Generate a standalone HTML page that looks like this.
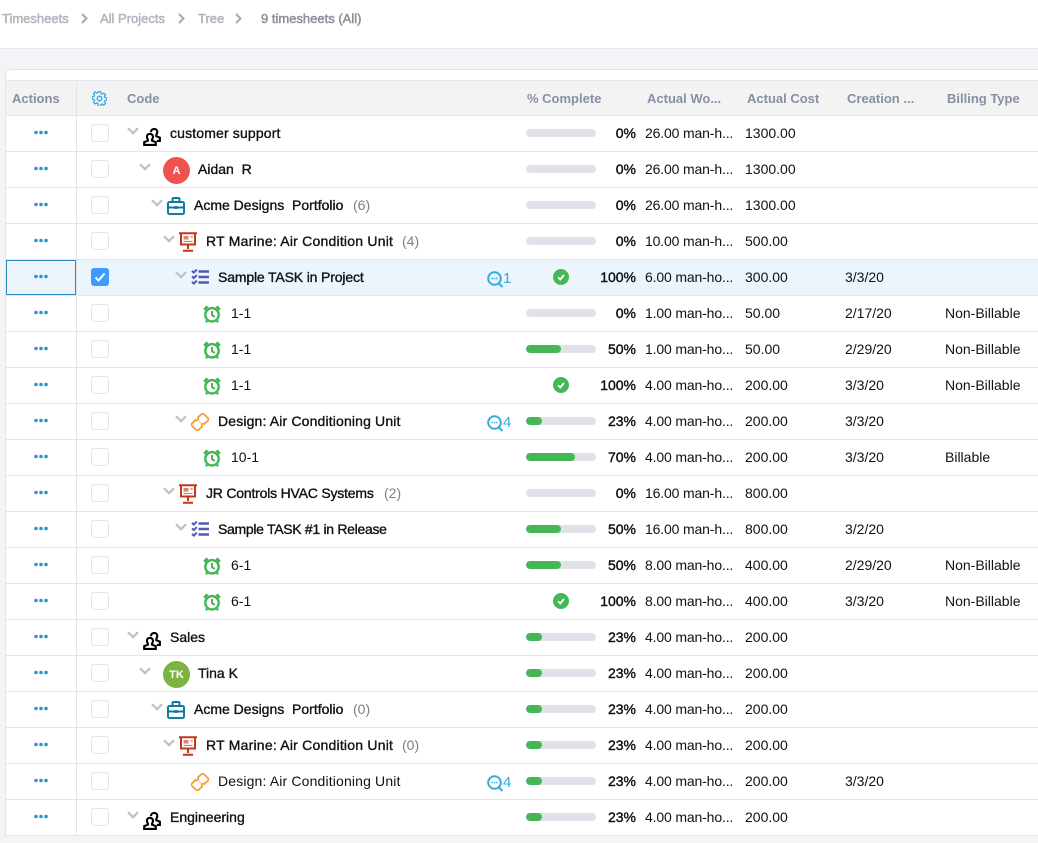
<!DOCTYPE html>
<html><head><meta charset="utf-8"><style>
html,body{margin:0;padding:0;width:1038px;height:843px;overflow:hidden;background:#fff;font-family:"Liberation Sans",sans-serif;font-size:14px;color:#111}
#top{position:absolute;left:0;top:0;width:1038px;height:48px;border-bottom:1px solid #e3e5ea}
#bg{position:absolute;left:0;top:49px;width:1038px;height:794px;background:#f3f4f6}
#card{position:absolute;left:5px;top:69px;width:1040px;height:767px;background:#fff;border:1px solid #e3e5ea;border-radius:4px 0 0 0;box-sizing:border-box}
.bc{position:absolute;top:10px;line-height:18px;color:#b0b4bc;font-size:13px;-webkit-text-stroke:.5px #b0b4bc;white-space:nowrap}
.hd{position:absolute;left:6px;top:80px;width:1032px;height:34px;background:#f3f3f4;border-top:1px solid #e3e5ea;border-bottom:1px solid #e3e5ea}
.h{position:absolute;top:81px;line-height:35px;color:#8790a3;font-weight:bold;font-size:13px;white-space:nowrap}
.r{position:absolute;left:6px;width:1032px;height:35px;border-bottom:1px solid #e3e5ea;white-space:nowrap}
.r.s{background:#ebf5fb}
.r>*{position:absolute}
.r span{line-height:34px;top:0}
.n{-webkit-text-stroke:.35px #111}
.c{color:#7b7f87}
.pc{right:402px;width:50px;text-align:right;-webkit-text-stroke:.4px #111}
.w{left:639px;letter-spacing:-.15px}.k{left:739px}.t{left:839px}.b{left:939px}
.dots{left:28px;top:14px;width:14px;height:5px}
.cb{left:85px;top:8px;width:18px;height:18px;box-sizing:border-box;border:1px solid #e3e5ea;border-radius:3px;background:#fff}
.ch{top:11px;width:12px;height:8px}
.bar{left:520px;top:13px;width:70px;height:8px;border-radius:4px;background:#dfe2e8;overflow:hidden}
.bar b{display:block;height:8px;background:#45b757;border-radius:4px}
.ok{left:547px;top:9px;width:16px;height:16px}
.cm{left:481px;top:11px;width:17px;height:17px}
.dg{left:497px;color:#3aa9de;font-size:15px;top:2px!important}
.av{left:157px;top:5px;width:27px;height:27px;border-radius:50%;color:#fff;font-size:11px;font-weight:bold;line-height:28px;text-align:center;font-style:normal}
.vl{position:absolute;left:76px;top:81px;width:1px;height:754px;background:#e3e5ea}
.cur{position:absolute;left:6px;top:260px;width:70px;height:35px;box-sizing:border-box;border:1px solid #2e8bc0}
svg{display:block}
</style></head><body>
<svg width="0" height="0" style="position:absolute"><defs>
<symbol id="dots" viewBox="0 0 14 5"><circle cx="2" cy="2.500" r="1.800" fill="#2f93c9"/><circle cx="7" cy="2.500" r="1.800" fill="#2f93c9"/><circle cx="12" cy="2.500" r="1.800" fill="#2f93c9"/></symbol>
<symbol id="chev" viewBox="0 0 12 8"><path d="M1 1.200l5 5 5-5" fill="none" stroke="#bcc3cf" stroke-width="2.400"/></symbol>
<symbol id="team" viewBox="0 0 18 18"><g fill="none" stroke="#000" stroke-width="2.100"><path d="M6.800 5.800c-1.900 0-2.900 1.400-2.900 3 0 1.200.5 2.100 1 2.800v1.100L1.200 14.100v2.800h11.600v-2.800L9 12.700v-1.100c.5-.7 1-1.600 1-2.800 0-1.600-1.200-3-3.200-3z"/><path d="M7.800 4C8.300 2 9.700 1 11.300 1c1.900 0 3 1.400 3 3 0 1.200-.5 2.100-1 2.800v1.400l3.600 1.500v3.200h-3"/></g></symbol>
<symbol id="brief" viewBox="0 0 18 18"><g fill="none" stroke="#0e7a9c" stroke-width="2"><rect x="1" y="5" width="16" height="12" rx="1.500"/><path d="M5.500 5V2.200Q5.500 1 6.700 1h4.600q1.200 0 1.200 1.200V5M1 10.500h16"/></g><rect x="7.500" y="9" width="3" height="3" fill="#0e7a9c"/></symbol>
<symbol id="pres" viewBox="0 0 18 20"><g fill="none" stroke="#c0391b" stroke-width="2"><path d="M0 1.200h18M2 1.500v11h14v-11M9 12.500V17M4 18.800h10"/></g><rect x="4.500" y="4" width="5" height="3.500" fill="#d9836f"/><path d="M11 5h3M4.500 9.500h9" stroke="#d9836f" stroke-width="1.200"/></symbol>
<symbol id="task" viewBox="0 0 18 16"><g fill="none" stroke="#4f5bb0"><path d="M7.500 2.500H18M7.500 8H18M7.500 13.500H18" stroke-width="2.500"/><path d="M1 1.800l1.800 1.800L5.800.6M1 7.300l1.800 1.800 3-3M1 12.800l1.800 1.800 3-3" stroke-width="2"/></g></symbol>
<symbol id="clock" viewBox="0 0 18 18"><g fill="none" stroke="#45b757"><circle cx="9" cy="9.800" r="6.700" stroke-width="2.500"/><path d="M9 6V10.300l2.900 1.600" stroke-width="2"/><path d="M1.200 4.800L4.400 1.300M16.800 4.800L13.600 1.300" stroke-width="2.800"/><path d="M4.200 15.600L2.900 17.300M13.800 15.600L15.100 17.300" stroke-width="2.200"/></g></symbol>
<symbol id="tick" viewBox="0 0 18 18"><g transform="rotate(-45 9 9)" fill="none" stroke="#f59b2f"><path d="M.7 4.400H7.400a1.600 1.600 0 0 0 3.200 0H17.300V13.600H10.600a1.600 1.600 0 0 0-3.200 0H.7z" stroke-width="1.700"/><path d="M9 7.800v.9M9 9.600v.9" stroke-width="1.300"/></g></symbol>
<symbol id="cmt" viewBox="0 0 17 17"><circle cx="7.500" cy="7.500" r="6.300" fill="none" stroke="#3aa9de" stroke-width="2"/><path d="M11.500 12l4 4" stroke="#3aa9de" stroke-width="2"/><path d="M4.500 7.500h6" stroke="#3aa9de" stroke-width="1.500" stroke-dasharray="1.500 .8"/></symbol>
<symbol id="ok" viewBox="0 0 16 16"><circle cx="8" cy="8" r="8" fill="#45b757"/><path d="M5 8.300l2.200 2.200L11 6" fill="none" stroke="#fff" stroke-width="1.800"/></symbol>
</defs></svg>
<div id="top">
<span class="bc" style="left:2px">Timesheets</span>
<svg style="position:absolute;left:81px;top:13px" width="7" height="11"><path d="M1 1l4.500 4.500L1 10" fill="none" stroke="#a5a9b0" stroke-width="2"/></svg>
<span class="bc" style="left:100px">All Projects</span>
<svg style="position:absolute;left:178px;top:13px" width="7" height="11"><path d="M1 1l4.500 4.500L1 10" fill="none" stroke="#a5a9b0" stroke-width="2"/></svg>
<span class="bc" style="left:198px">Tree</span>
<svg style="position:absolute;left:235px;top:13px" width="7" height="11"><path d="M1 1l4.500 4.500L1 10" fill="none" stroke="#a5a9b0" stroke-width="2"/></svg>
<span class="bc" style="left:261px;color:#8c9099;-webkit-text-stroke-color:#8c9099">9 timesheets (All)</span>
</div>
<div id="bg"></div><div id="card"></div>
<div class="hd"></div>
<span class="h" style="left:12px">Actions</span>
<svg style="position:absolute;left:92px;top:91px" width="15" height="15" viewBox="0 0 15 15"><circle cx="7.500" cy="7.500" r="2.300" fill="none" stroke="#3aa9de" stroke-width="1.400"/><path d="M6.300 .8h2.400l.3 1.900 1.200.5 1.600-1.100 1.700 1.700-1.100 1.600.5 1.200 1.900.3v2.400l-1.900.3-.5 1.200 1.100 1.600-1.700 1.700-1.600-1.100-1.200.5-.3 1.900H6.300L6 12.300l-1.200-.5-1.600 1.100-1.700-1.700 1.100-1.600-.5-1.200L.2 8.100V5.700l1.900-.3.500-1.200-1.100-1.600 1.700-1.700 1.600 1.100 1.200-.5z" fill="none" stroke="#3aa9de" stroke-width="1.300"/></svg>
<span class="h" style="left:127px">Code</span>
<span class="h" style="left:527px">% Complete</span>
<span class="h" style="left:647px">Actual Wo...</span>
<span class="h" style="left:747px">Actual Cost</span>
<span class="h" style="left:847px">Creation ...</span>
<span class="h" style="left:947px">Billing Type</span>

<div class="r" style="top:116px"><svg class="dots"><use href="#dots"/></svg><i class="cb"></i><svg class="ch" style="left:121px"><use href="#chev"/></svg><svg style="left:137px;top:12px" width="18" height="18"><use href="#team"/></svg><span class="n" style="left:164px;letter-spacing:.15px">customer support</span><i class="bar"></i><span class="pc">0%</span><span class="w">26.00 man-h...</span><span class="k">1300.00</span></div>

<div class="r" style="top:152px"><svg class="dots"><use href="#dots"/></svg><i class="cb"></i><svg class="ch" style="left:133px"><use href="#chev"/></svg><i class="av" style="background:#ef5350">A</i><span class="n" style="left:192px">Aidan&nbsp; R</span><i class="bar"></i><span class="pc">0%</span><span class="w">26.00 man-h...</span><span class="k">1300.00</span></div>

<div class="r" style="top:188px"><svg class="dots"><use href="#dots"/></svg><i class="cb"></i><svg class="ch" style="left:145px"><use href="#chev"/></svg><svg style="left:161px;top:9px" width="18" height="18"><use href="#brief"/></svg><span class="n" style="left:188px">Acme Designs&nbsp; Portfolio</span><span class="c" style="left:347px">(6)</span><i class="bar"></i><span class="pc">0%</span><span class="w">26.00 man-h...</span><span class="k">1300.00</span></div>

<div class="r" style="top:224px"><svg class="dots"><use href="#dots"/></svg><i class="cb"></i><svg class="ch" style="left:157px"><use href="#chev"/></svg><svg style="left:173px;top:8px" width="18" height="20"><use href="#pres"/></svg><span class="n" style="left:200px;letter-spacing:.22px">RT Marine: Air Condition Unit</span><span class="c" style="left:396px">(4)</span><i class="bar"></i><span class="pc">0%</span><span class="w">10.00 man-h...</span><span class="k">500.00</span></div>

<div class="r s" style="top:260px"><svg class="dots"><use href="#dots"/></svg><i class="cb" style="background:#3f9bff;border-color:#3f9bff"><svg width="16" height="16" viewBox="0 0 16 16"><path d="M3.500 8.500l3 3L12.500 4.500" fill="none" stroke="#fff" stroke-width="2"/></svg></i><svg class="ch" style="left:169px"><use href="#chev"/></svg><svg style="left:185px;top:9px" width="18" height="16"><use href="#task"/></svg><span class="n" style="left:212px;letter-spacing:-.15px">Sample TASK in Project</span><svg class="cm"><use href="#cmt"/></svg><span class="dg">1</span><svg class="ok"><use href="#ok"/></svg><span class="pc">100%</span><span class="w">6.00 man-ho...</span><span class="k">300.00</span><span class="t">3/3/20</span></div>

<div class="r" style="top:296px"><svg class="dots"><use href="#dots"/></svg><i class="cb"></i><svg style="left:197px;top:9px" width="18" height="18"><use href="#clock"/></svg><span style="left:225px">1-1</span><i class="bar"></i><span class="pc">0%</span><span class="w">1.00 man-ho...</span><span class="k">50.00</span><span class="t">2/17/20</span><span class="b">Non-Billable</span></div>

<div class="r" style="top:332px"><svg class="dots"><use href="#dots"/></svg><i class="cb"></i><svg style="left:197px;top:9px" width="18" height="18"><use href="#clock"/></svg><span style="left:225px">1-1</span><i class="bar"><b style="width:35px"></b></i><span class="pc">50%</span><span class="w">1.00 man-ho...</span><span class="k">50.00</span><span class="t">2/29/20</span><span class="b">Non-Billable</span></div>

<div class="r" style="top:368px"><svg class="dots"><use href="#dots"/></svg><i class="cb"></i><svg style="left:197px;top:9px" width="18" height="18"><use href="#clock"/></svg><span style="left:225px">1-1</span><svg class="ok"><use href="#ok"/></svg><span class="pc">100%</span><span class="w">4.00 man-ho...</span><span class="k">200.00</span><span class="t">3/3/20</span><span class="b">Non-Billable</span></div>

<div class="r" style="top:404px"><svg class="dots"><use href="#dots"/></svg><i class="cb"></i><svg class="ch" style="left:169px"><use href="#chev"/></svg><svg style="left:185px;top:9px" width="18" height="18"><use href="#tick"/></svg><span class="n" style="left:212px;letter-spacing:.15px">Design: Air Conditioning Unit</span><svg class="cm"><use href="#cmt"/></svg><span class="dg">4</span><i class="bar"><b style="width:16px"></b></i><span class="pc">23%</span><span class="w">4.00 man-ho...</span><span class="k">200.00</span><span class="t">3/3/20</span></div>

<div class="r" style="top:440px"><svg class="dots"><use href="#dots"/></svg><i class="cb"></i><svg style="left:197px;top:9px" width="18" height="18"><use href="#clock"/></svg><span style="left:225px">10-1</span><i class="bar"><b style="width:49px"></b></i><span class="pc">70%</span><span class="w">4.00 man-ho...</span><span class="k">200.00</span><span class="t">3/3/20</span><span class="b">Billable</span></div>

<div class="r" style="top:476px"><svg class="dots"><use href="#dots"/></svg><i class="cb"></i><svg class="ch" style="left:157px"><use href="#chev"/></svg><svg style="left:173px;top:8px" width="18" height="20"><use href="#pres"/></svg><span class="n" style="left:200px;letter-spacing:-.2px">JR Controls HVAC Systems</span><span class="c" style="left:378px">(2)</span><i class="bar"></i><span class="pc">0%</span><span class="w">16.00 man-h...</span><span class="k">800.00</span></div>

<div class="r" style="top:512px"><svg class="dots"><use href="#dots"/></svg><i class="cb"></i><svg class="ch" style="left:169px"><use href="#chev"/></svg><svg style="left:185px;top:9px" width="18" height="16"><use href="#task"/></svg><span class="n" style="left:212px;letter-spacing:-.3px">Sample TASK #1 in Release</span><i class="bar"><b style="width:35px"></b></i><span class="pc">50%</span><span class="w">16.00 man-h...</span><span class="k">800.00</span><span class="t">3/2/20</span></div>

<div class="r" style="top:548px"><svg class="dots"><use href="#dots"/></svg><i class="cb"></i><svg style="left:197px;top:9px" width="18" height="18"><use href="#clock"/></svg><span style="left:225px">6-1</span><i class="bar"><b style="width:35px"></b></i><span class="pc">50%</span><span class="w">8.00 man-ho...</span><span class="k">400.00</span><span class="t">2/29/20</span><span class="b">Non-Billable</span></div>

<div class="r" style="top:584px"><svg class="dots"><use href="#dots"/></svg><i class="cb"></i><svg style="left:197px;top:9px" width="18" height="18"><use href="#clock"/></svg><span style="left:225px">6-1</span><svg class="ok"><use href="#ok"/></svg><span class="pc">100%</span><span class="w">8.00 man-ho...</span><span class="k">400.00</span><span class="t">3/3/20</span><span class="b">Non-Billable</span></div>

<div class="r" style="top:620px"><svg class="dots"><use href="#dots"/></svg><i class="cb"></i><svg class="ch" style="left:121px"><use href="#chev"/></svg><svg style="left:137px;top:12px" width="18" height="18"><use href="#team"/></svg><span class="n" style="left:164px">Sales</span><i class="bar"><b style="width:16px"></b></i><span class="pc">23%</span><span class="w">4.00 man-ho...</span><span class="k">200.00</span></div>

<div class="r" style="top:656px"><svg class="dots"><use href="#dots"/></svg><i class="cb"></i><svg class="ch" style="left:133px"><use href="#chev"/></svg><i class="av" style="background:#7cb342">TK</i><span class="n" style="left:192px">Tina K</span><i class="bar"><b style="width:16px"></b></i><span class="pc">23%</span><span class="w">4.00 man-ho...</span><span class="k">200.00</span></div>

<div class="r" style="top:692px"><svg class="dots"><use href="#dots"/></svg><i class="cb"></i><svg class="ch" style="left:145px"><use href="#chev"/></svg><svg style="left:161px;top:9px" width="18" height="18"><use href="#brief"/></svg><span class="n" style="left:188px">Acme Designs&nbsp; Portfolio</span><span class="c" style="left:347px">(0)</span><i class="bar"><b style="width:16px"></b></i><span class="pc">23%</span><span class="w">4.00 man-ho...</span><span class="k">200.00</span></div>

<div class="r" style="top:728px"><svg class="dots"><use href="#dots"/></svg><i class="cb"></i><svg class="ch" style="left:157px"><use href="#chev"/></svg><svg style="left:173px;top:8px" width="18" height="20"><use href="#pres"/></svg><span class="n" style="left:200px;letter-spacing:.22px">RT Marine: Air Condition Unit</span><span class="c" style="left:396px">(0)</span><i class="bar"><b style="width:16px"></b></i><span class="pc">23%</span><span class="w">4.00 man-ho...</span><span class="k">200.00</span></div>

<div class="r" style="top:764px"><svg class="dots"><use href="#dots"/></svg><i class="cb"></i><svg style="left:185px;top:9px" width="18" height="18"><use href="#tick"/></svg><span style="left:212px;letter-spacing:.15px">Design: Air Conditioning Unit</span><svg class="cm"><use href="#cmt"/></svg><span class="dg">4</span><i class="bar"><b style="width:16px"></b></i><span class="pc">23%</span><span class="w">4.00 man-ho...</span><span class="k">200.00</span><span class="t">3/3/20</span></div>

<div class="r" style="top:800px"><svg class="dots"><use href="#dots"/></svg><i class="cb"></i><svg class="ch" style="left:121px"><use href="#chev"/></svg><svg style="left:137px;top:12px" width="18" height="18"><use href="#team"/></svg><span class="n" style="left:164px">Engineering</span><i class="bar"><b style="width:16px"></b></i><span class="pc">23%</span><span class="w">4.00 man-ho...</span><span class="k">200.00</span></div>

<div class="vl"></div><div class="cur"></div>
</body></html>
